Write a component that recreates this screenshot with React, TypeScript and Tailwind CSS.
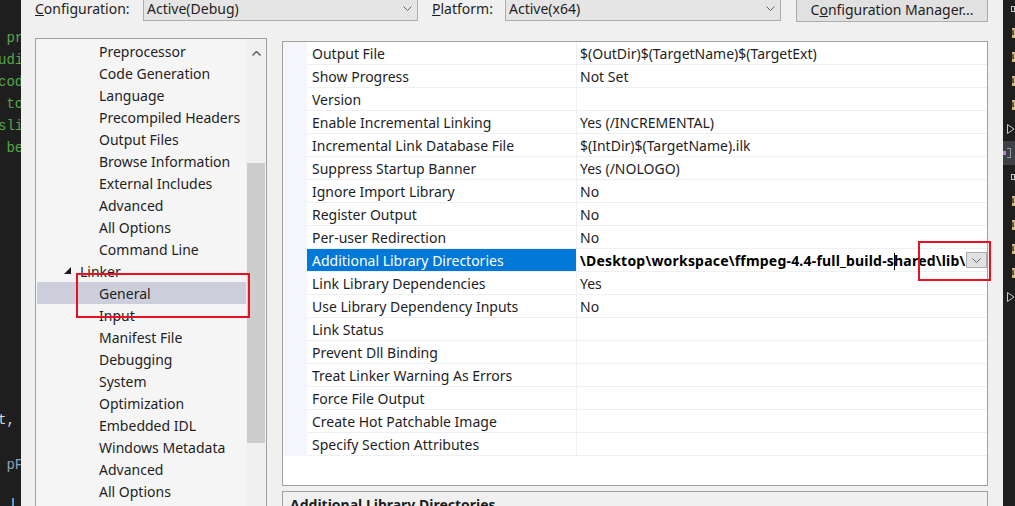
import React from "react";

type Row = { name: string; value: string; selected?: boolean };

const rows: Row[] = [
  { name: "Output File", value: "$(OutDir)$(TargetName)$(TargetExt)" },
  { name: "Show Progress", value: "Not Set" },
  { name: "Version", value: "" },
  { name: "Enable Incremental Linking", value: "Yes (/INCREMENTAL)" },
  { name: "Incremental Link Database File", value: "$(IntDir)$(TargetName).ilk" },
  { name: "Suppress Startup Banner", value: "Yes (/NOLOGO)" },
  { name: "Ignore Import Library", value: "No" },
  { name: "Register Output", value: "No" },
  { name: "Per-user Redirection", value: "No" },
  { name: "Additional Library Directories", value: "", selected: true },
  { name: "Link Library Dependencies", value: "Yes" },
  { name: "Use Library Dependency Inputs", value: "No" },
  { name: "Link Status", value: "" },
  { name: "Prevent Dll Binding", value: "" },
  { name: "Treat Linker Warning As Errors", value: "" },
  { name: "Force File Output", value: "" },
  { name: "Create Hot Patchable Image", value: "" },
  { name: "Specify Section Attributes", value: "" },
];

const beforeLinker = [
  "Preprocessor",
  "Code Generation",
  "Language",
  "Precompiled Headers",
  "Output Files",
  "Browse Information",
  "External Includes",
  "Advanced",
  "All Options",
  "Command Line",
];

const afterLinker = [
  "General",
  "Input",
  "Manifest File",
  "Debugging",
  "System",
  "Optimization",
  "Embedded IDL",
  "Windows Metadata",
  "Advanced",
  "All Options",
];

function Chevron({ className = "" }: { className?: string }) {
  return (
    <svg width="9" height="5" viewBox="0 0 9 5" className={className}>
      <polyline points="0.5,0.5 4.5,4.5 8.5,0.5" fill="none" stroke="#606060" strokeWidth="1" />
    </svg>
  );
}

function Combo({ text, width }: { text: string; width: string }) {
  return (
    <div className={`flex h-[25px] items-center justify-between border border-[#adadad] bg-[#e5e5e5] pl-[3px] pr-[5px] ${width}`}>
      <span>{text}</span>
      <Chevron />
    </div>
  );
}

function CodeStrip() {
  const green = [" pr", "udi", "cod", " to", "sli", " be"];
  return (
    <div className="w-[21px] shrink-0 overflow-hidden bg-[#1e1e1e] font-['Liberation_Mono',monospace] text-[14px] leading-[22px]">
      <div className="h-[27px]" />
      {green.map((t, i) => (
        <div key={i} className="-ml-[2px] h-[22px] whitespace-pre text-[#57a64a]">
          {t}
        </div>
      ))}
      <div className="h-[250px]" />
      <div className="-ml-[2px] h-[22px] whitespace-pre text-[#dcdcdc]">t,</div>
      <div className="h-[23px]" />
      <div className="-ml-[2px] h-[22px] whitespace-pre text-[#8fa3b8]"> pF</div>
      <div className="h-[22px]" />
      <div className="ml-[12px] h-[10px] w-[2px] bg-[#569cd6]" />
    </div>
  );
}

function RightStrip() {
  const kinds = ["box", "folder", "folder", "folder", "folder", "tri", "hl", "box", "folder", "folder", "folder", "folder", "tri"];
  return (
    <div className="w-[12px] shrink-0 overflow-hidden bg-[#1e1e1e]">
      <div className="-mt-[3px]">
        {kinds.map((k, i) => (
          <div key={i} className={`flex h-[24px] items-center ${k === "hl" ? "bg-[#3f3f46]" : ""}`}>
            {k === "box" && <div className="ml-[8px] h-[6px] w-[6px] border border-[#c8c8c8]" />}
            {k === "folder" && (
              <div className="ml-[9px] flex h-[10px] w-[6px] bg-[#dcb67a]">
                <div className="mt-[2px] h-[5px] w-[2px] bg-[#5a5a5a]" />
              </div>
            )}
            {k === "tri" && (
              <svg width="8" height="10" viewBox="0 0 8 10" className="ml-[4px]">
                <polygon points="0.5,0.5 7,5 0.5,9.5" fill="none" stroke="#c8c8c8" strokeWidth="1" />
              </svg>
            )}
            {k === "hl" && (
              <div className="flex items-center">
                <div className="h-[4px] w-[3px] bg-[#b180d7]" />
                <div className="ml-[1px] h-[10px] w-[4px] border border-l-0 border-[#9a9a9a]" />
              </div>
            )}
          </div>
        ))}
      </div>
    </div>
  );
}

function TreeItem({ text, selected }: { text: string; selected?: boolean }) {
  return (
    <div className={`flex h-[22px] items-center pl-[62px] ${selected ? "bg-[#cccedb]" : ""}`}>{text}</div>
  );
}

function Tree() {
  return (
    <div className="flex h-[480px] w-[232px] shrink-0 border border-[#a0a0a0] bg-[#f5f5f5]">
      <div className="flex-1 pl-px pt-px">
        {beforeLinker.map((t, i) => (
          <TreeItem key={"a" + i} text={t} />
        ))}
        <div className="flex h-[22px] items-center gap-[8px] pl-[27px]">
          <svg width="8" height="8" viewBox="0 0 8 8">
            <polygon points="7,0 7,7 0,7" fill="#1e1e1e" />
          </svg>
          <span>Linker</span>
        </div>
        {afterLinker.map((t, i) => (
          <TreeItem key={"b" + i} text={t} selected={i === 0} />
        ))}
      </div>
      <div className="flex w-[20px] flex-col items-center bg-[#f0f0f0]">
        <div className="flex h-[17px] items-end">
          <svg width="9" height="5" viewBox="0 0 9 5">
            <polyline points="0.5,4.5 4.5,0.5 8.5,4.5" fill="none" stroke="#606060" strokeWidth="1.5" />
          </svg>
        </div>
        <div className="mt-[107px] h-[280px] w-[18px] bg-[#cdcdcd]" />
      </div>
    </div>
  );
}

function SelectedValue() {
  return (
    <div className="flex h-full w-full items-center justify-between">
      <span className="min-w-0 overflow-hidden whitespace-nowrap pl-[3px] font-bold tracking-[0.2px] text-black">
        {"\\Desktop\\workspace\\ffmpeg-4.4-full_build-s"}
        <span className="-mr-px inline-block h-[17px] w-px bg-black align-middle" />
        {"hared\\lib\\"}
      </span>
      <div className="flex h-[16px] w-[21px] shrink-0 items-center justify-center border border-[#adadad] bg-[#e1e1e1]">
        <Chevron />
      </div>
    </div>
  );
}

function Grid() {
  return (
    <div className="mt-[3px] h-[445px] w-[706px] border border-[#a0a0a0] bg-white">
      {rows.map((r, i) => (
        <div key={i} className="flex h-[23px]">
          <div className="w-[24px] shrink-0 bg-[#f4f6fb]" />
          <div
            className={`flex w-[269px] shrink-0 items-center border-b border-[#eef0f4] pl-[5px] ${
              r.selected ? "bg-[#0078d7] text-white" : ""
            }`}
          >
            {r.name}
          </div>
          <div className="flex min-w-0 flex-1 items-center overflow-hidden border-b border-l border-[#eef0f4]">
            {r.selected ? <SelectedValue /> : <span className="pl-[3px]">{r.value}</span>}
          </div>
        </div>
      ))}
    </div>
  );
}

export default function App() {
  return (
    <div className="relative flex h-[506px] w-[1015px] overflow-hidden bg-[#f0f0f0] font-['Noto_Sans',sans-serif] text-[14px] text-[#1e1e1e]">
      <CodeStrip />
      <div className="flex w-[982px] shrink-0 flex-col">
        <div className="-mt-[4px] flex h-[26px] shrink-0 items-start pl-[14px]">
          <div className="flex h-[25px] w-[108px] items-center">
            <span>
              <span className="underline">C</span>onfiguration:
            </span>
          </div>
          <Combo text="Active(Debug)" width="w-[275px]" />
          <div className="ml-[14px] flex h-[25px] w-[73px] items-center">
            <span>
              <span className="underline">P</span>latform:
            </span>
          </div>
          <Combo text="Active(x64)" width="w-[276px]" />
          <div className="ml-[15px] flex h-[26px] w-[192px] items-center justify-center border border-[#adadad] bg-[#e1e1e1]">
            <span>
              C<span className="underline">o</span>nfiguration Manager...
            </span>
          </div>
        </div>
        <div className="mt-[16px] flex gap-[15px] pl-[14px]">
          <Tree />
          <div className="flex flex-col">
            <Grid />
            <div className="mt-[5px] h-[60px] w-[706px] border border-[#a0a0a0] bg-[#f0f0f0] pl-[7px] pt-[2px] font-bold">
              Additional Library Directories
            </div>
          </div>
        </div>
      </div>
      <RightStrip />

      <div className="pointer-events-none absolute left-[76px] top-[273px] h-[45px] w-[174px] border-2 border-[#e81123]" />
      <div className="pointer-events-none absolute left-[918px] top-[241px] h-[40px] w-[73px] border-2 border-[#e81123]" />
    </div>
  );
}
